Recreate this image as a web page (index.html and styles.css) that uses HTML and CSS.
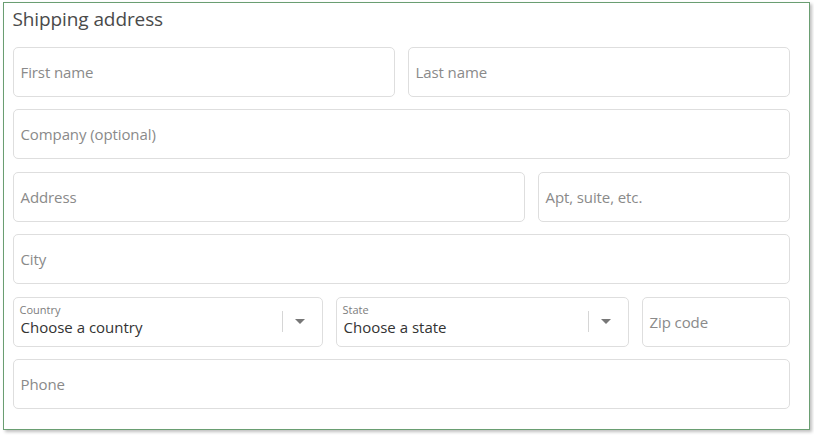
FILE: index.html
```html
<!DOCTYPE html>
<html>
<head>
<meta charset="utf-8">
<link rel="stylesheet" href="styles.css">
</head>
<body>
<div class="frame">
  <h2 class="title">Shipping address</h2>
  <div class="rows">
    <div class="row two">
      <div class="field"><span class="ph">First name</span></div>
      <div class="field"><span class="ph">Last name</span></div>
    </div>
    <div class="row">
      <div class="field"><span class="ph">Company (optional)</span></div>
    </div>
    <div class="row addr">
      <div class="field"><span class="ph">Address</span></div>
      <div class="field"><span class="ph">Apt, suite, etc.</span></div>
    </div>
    <div class="row">
      <div class="field"><span class="ph">City</span></div>
    </div>
    <div class="row geo">
      <div class="field select">
        <div class="sel-text">
          <span class="lbl">Country</span>
          <span class="val">Choose a country</span>
        </div>
        <div class="sel-div"></div>
        <div class="sel-arrow"></div>
      </div>
      <div class="field select">
        <div class="sel-text">
          <span class="lbl">State</span>
          <span class="val">Choose a state</span>
        </div>
        <div class="sel-div"></div>
        <div class="sel-arrow"></div>
      </div>
      <div class="field"><span class="ph">Zip code</span></div>
    </div>
    <div class="row">
      <div class="field"><span class="ph">Phone</span></div>
    </div>
  </div>
</div>
</body>
</html>
```
FILE: styles.css
```css
html, body {
  margin: 0;
  padding: 0;
  background: #ffffff;
}
body {
  font-family: "Open Sans", "Liberation Sans", sans-serif;
  width: 814px;
  height: 435px;
  overflow: hidden;
}
.frame {
  box-sizing: border-box;
  margin: 2px 0 0 3px;
  width: 807px;
  height: 428px;
  border: 1.5px solid #6a9e72;
  box-shadow: 2px 2px 3px rgba(0,0,0,0.25);
  padding: 0 19px 0 8.5px;
  background: #fff;
}
.title {
  margin: 0;
  padding-top: 4px;
  height: 43.5px;
  box-sizing: border-box;
  font-weight: 400;
  font-size: 19px;
  line-height: 24px;
  color: #4a4a4a;
  letter-spacing: -0.1px;
}
.rows {
  display: flex;
  flex-direction: column;
  gap: 12.5px;
}
.row {
  display: grid;
  grid-template-columns: 1fr;
  gap: 13px;
}
.row.two { grid-template-columns: 382px 1fr; }
.row.addr { grid-template-columns: 512px 1fr; }
.row.geo { grid-template-columns: 310px 293px 1fr; }
.field {
  box-sizing: border-box;
  height: 50px;
  border: 1px solid #dedede;
  border-radius: 5px;
  display: flex;
  align-items: center;
  padding: 0 7px;
  background: #fff;
}
.ph {
  font-size: 15px;
  color: #8a8a8a;
  letter-spacing: -0.1px;
}
.select {
  padding: 0 0 0 6px;
}
.sel-text {
  flex: 1;
  display: flex;
  flex-direction: column;
  padding-bottom: 3px;
}
.lbl {
  display: block;
  font-size: 11px;
  line-height: 15px;
  color: #7d7d7d;
}
.val {
  display: block;
  font-size: 15px;
  line-height: 21px;
  color: #333;
  padding-left: 1px;
}
.sel-div {
  width: 1px;
  height: 21px;
  background: #d6d6d6;
}
.sel-arrow {
  width: 0;
  height: 0;
  border-left: 5px solid transparent;
  border-right: 5px solid transparent;
  border-top: 5px solid #777;
  margin: 0 17px 0 12px;
}
```
